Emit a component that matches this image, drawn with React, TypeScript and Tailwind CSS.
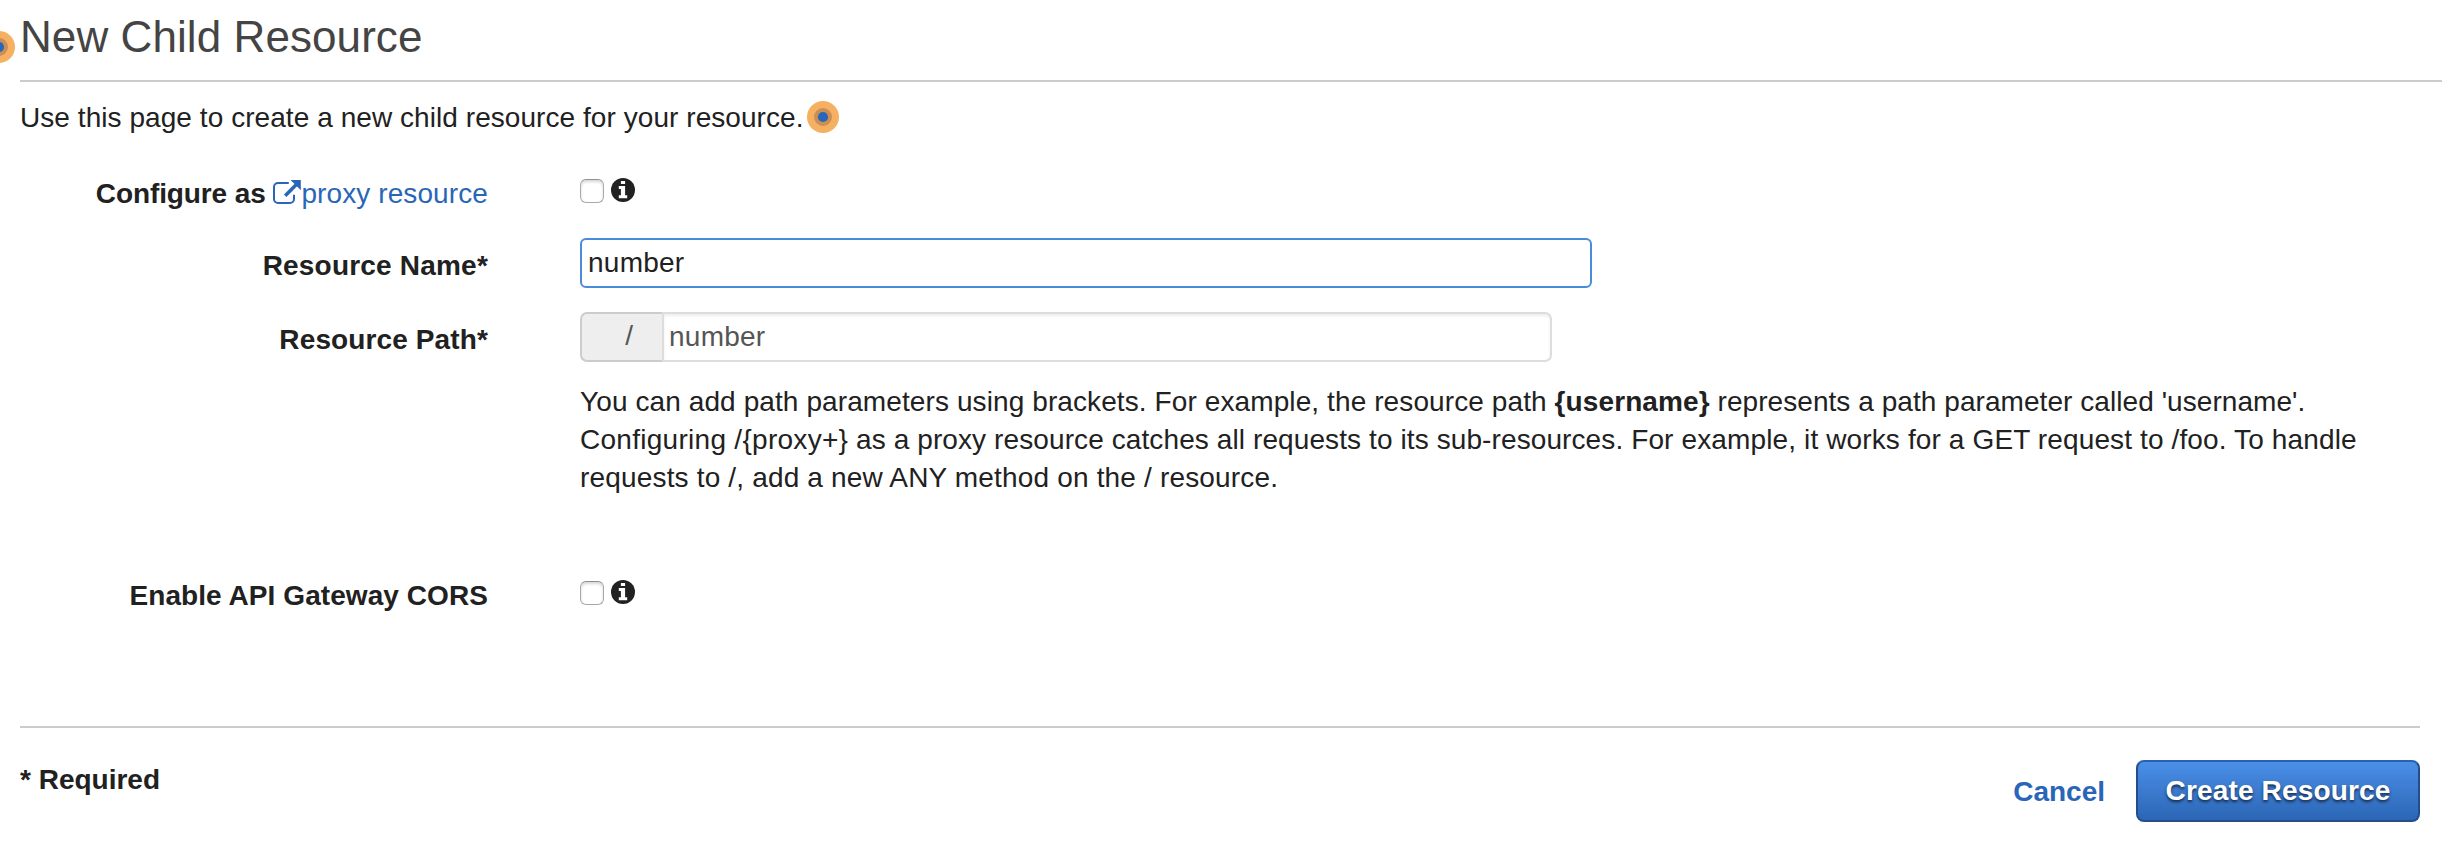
import { ReactNode } from "react";

function GuideDot({ className = "" }: { className?: string }) {
  return (
    <svg viewBox="0 0 32 32" className={`size-8 shrink-0 ${className}`}>
      <circle cx="16" cy="16" r="16" fill="#f6b062" />
      <circle cx="16" cy="16" r="9" fill="#c98f56" />
      <circle cx="16" cy="16" r="5.1" fill="#2a66b8" />
    </svg>
  );
}

function ExternalIcon() {
  return (
    <svg viewBox="0 0 28 25" className="mt-[5px] h-[25px] w-[28px] shrink-0" fill="none">
      <path
        d="M15.8 3H5A4 4 0 0 0 1 7V19A4 4 0 0 0 5 23H17A4 4 0 0 0 21 19V14.8"
        stroke="#2a66b8"
        strokeWidth="2"
      />
      <path d="M12.2 15.8 23.4 4.6" stroke="#2a66b8" strokeWidth="3.5" />
      <path d="M17.6 0H27.8V10.2Z" fill="#2a66b8" />
    </svg>
  );
}

function CheckWithInfo() {
  return (
    <div className="flex items-start">
      <span className="mt-1 size-6 rounded-[6px] border border-[#a9a9a9] border-t-[#8f8f8f] bg-white shadow-[inset_0_2px_3px_rgba(0,0,0,0.16)]" />
      <svg viewBox="0 0 24 24" className="mt-[3px] ml-[7px] size-6">
        <circle cx="12" cy="12" r="12" fill="#212121" />
        <path d="M9.9 3H14.1V6H9.9ZM7.8 8H14.1V17.2H16.2V20.2H7.8V17.2H9.9V11H7.8Z" fill="#fff" />
      </svg>
    </div>
  );
}

interface RowProps {
  label: ReactNode;
  labelClass?: string;
  className?: string;
  children: ReactNode;
}

function Row({ label, labelClass = "", className = "", children }: RowProps) {
  return (
    <div className={`flex items-start ${className}`}>
      <div className={`mr-[92px] flex w-[488px] shrink-0 justify-end font-bold whitespace-pre ${labelClass}`}>{label}</div>
      {children}
    </div>
  );
}

export default function App() {
  return (
    <main className="relative h-[868px] w-[2442px] overflow-hidden bg-white font-['Liberation_Sans',Arial,sans-serif] text-[28px] leading-[38px] text-[#212121]">
      <GuideDot className="absolute top-[31px] left-[-17px]" />
      <header className="ml-5 h-[82px] border-b-2 border-[#cccccc] pt-3">
        <h1 className="text-[44px] leading-[50px] tracking-[0.08px] text-[#444444]">New Child Resource</h1>
      </header>

      <div className="mt-[17px] ml-5 flex items-start">
        <p className="tracking-[0.06px] whitespace-nowrap">Use this page to create a new child resource for your resource.</p>
        <GuideDot className="mt-[2px] ml-[3px]" />
      </div>

      <Row
        className="mt-[38px] h-[63px]"
        label={
          <>
            <span className="tracking-[-0.1px]">Configure as </span>
            <a className="flex items-start font-normal tracking-[0.1px] text-[#2a66b8]">
              <ExternalIcon />
              proxy resource
            </a>
          </>
        }
      >
        <CheckWithInfo />
      </Row>

      <Row className="h-[74px]" labelClass="pt-[9px] tracking-[0.2px]" label="Resource Name*">
        <input
          className="h-[50px] w-[1012px] rounded-[6px] border-2 border-[#4a8bdb] bg-white px-[6px] tracking-[0.25px] outline-none"
          defaultValue="number"
        />
      </Row>

      <Row className="h-[71px]" labelClass="pt-[9px] tracking-[0.12px]" label="Resource Path*">
        <div className="flex h-[50px] w-[972px]">
          <span className="flex w-[82px] justify-end rounded-l-[7px] border-2 border-r-0 border-[#cccccc] bg-[#eeeeee] pt-[3px] pr-[29px] text-[#555555]">
            /
          </span>
          <input
            className="min-w-0 flex-1 rounded-r-[7px] border-2 border-[#dddddd] bg-white px-[5px] tracking-[0.25px] text-[#555555] shadow-[inset_0_2px_3px_rgba(0,0,0,0.07)] outline-none"
            defaultValue="number"
          />
        </div>
      </Row>

      <Row className="h-[194px]" label="">
        <p className="tracking-[0.1px] whitespace-nowrap">
          You can add path parameters using brackets. For example, the resource path <b>{"{username}"}</b>
          <span className="tracking-[0.06px]"> represents a path parameter called 'username'.</span>
          <br />
          <span className="tracking-[0.28px]">Configuring /{"{proxy+}"}</span> as a proxy resource catches all requests to its
          sub-resources.
          <span className="tracking-[0.13px]"> For example, it works for a GET request to /foo. To handle</span>
          <br />
          <span className="tracking-[0.17px]">requests to /, add a new ANY method on the / resource.</span>
        </p>
      </Row>

      <Row className="h-[149px]" labelClass="tracking-[0.07px]" label="Enable API Gateway CORS">
        <CheckWithInfo />
      </Row>

      <footer className="mr-[22px] ml-5 flex items-start border-t-2 border-[#cccccc] font-bold">
        <span className="mt-[33px]">* Required</span>
        <button className="mt-[45px] mr-[31px] ml-auto text-[#2a66b8]">Cancel</button>
        <button className="mt-8 h-[62px] w-[284px] rounded-[8px] border-2 border-[#224f8b] border-t-[#2a62b0] bg-gradient-to-b from-[#4a8fe8] to-[#2c66b5] tracking-[0.15px] whitespace-nowrap text-white [text-shadow:0_2px_3px_rgba(0,0,0,0.65)]">
          Create Resource
        </button>
      </footer>
    </main>
  );
}
